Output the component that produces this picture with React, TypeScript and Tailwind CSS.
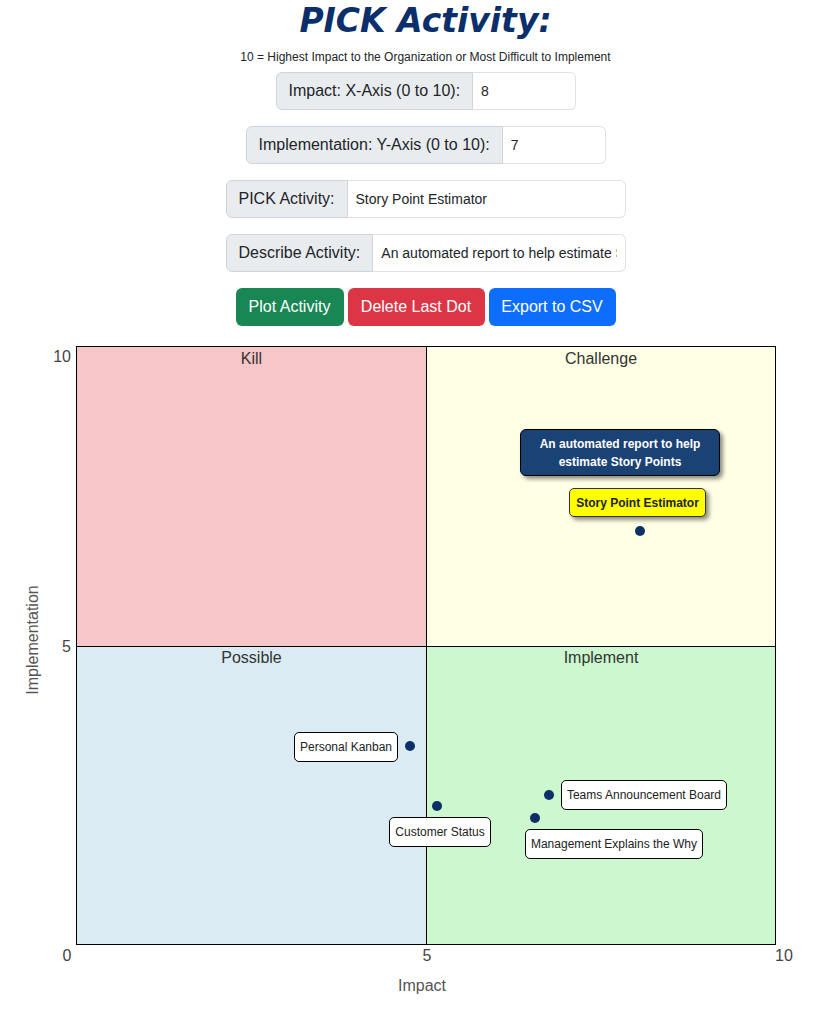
import { useState } from "react";

type Dot = { x: number; y: number };
type Tag = { left: number; top: number; w: number; text: string };

// chart positions are in page pixels, offset from the chart block top (326)
const dots: Dot[] = [
  { x: 635, y: 200 },
  { x: 405, y: 415 },
  { x: 432, y: 475 },
  { x: 544, y: 464 },
  { x: 530, y: 487 },
];

const tags: Tag[] = [
  { left: 294, top: 406, w: 104, text: "Personal Kanban" },
  { left: 389, top: 491, w: 102, text: "Customer Status" },
  { left: 561, top: 454, w: 166, text: "Teams Announcement Board" },
  { left: 525, top: 503, w: 178, text: "Management Explains the Why" },
];

const InputGroup = ({
  label,
  value,
  width,
}: {
  label: string;
  value: string;
  width: string;
}) => (
  <div className={`flex h-[38px] ${width}`}>
    <span className="flex shrink-0 items-center rounded-l-[6px] border border-[#ced4da] bg-[#e9ecef] px-3 text-[16px] text-[#212529]">
      {label}
    </span>
    <input
      className="min-w-0 flex-1 rounded-r-[6px] border border-l-0 border-[#dee2e6] bg-white px-2 text-[14px] text-[#212529] outline-none"
      defaultValue={value}
    />
  </div>
);

const App = () => {
  const [x] = useState("8");
  const [y] = useState("7");

  return (
    <div className="min-h-screen bg-white font-['Liberation_Sans',Arial,sans-serif] text-[#212529]">
      <div className="flex flex-col items-center pl-[25px]">
        <h1 className="h-[41px] font-['DejaVu_Sans',Verdana,sans-serif] text-[33px] font-bold italic leading-[41px] text-[#0a2f6b]">
          PICK Activity:
        </h1>
        <p className="mt-[7px] h-[18px] text-[12px] leading-[18px]">
          10 = Highest Impact to the Organization or Most Difficult to Implement
        </p>
        <div className="mt-[6px] flex flex-col items-center gap-4">
          <InputGroup label="Impact: X-Axis (0 to 10):" value={x} width="w-[300px]" />
          <InputGroup label="Implementation: Y-Axis (0 to 10):" value={y} width="w-[360px]" />
          <InputGroup label="PICK Activity:" value="Story Point Estimator" width="w-[400px]" />
          <InputGroup
            label="Describe Activity:"
            value="An automated report to help estimate Story Points"
            width="w-[400px]"
          />
          <div className="flex gap-[4px] text-[16px] text-white">
            <button className="h-[38px] w-[108px] rounded-[6px] bg-[#198754]">Plot Activity</button>
            <button className="h-[38px] w-[137px] rounded-[6px] bg-[#dc3545]">Delete Last Dot</button>
            <button className="h-[38px] w-[127px] rounded-[6px] bg-[#0d6efd]">Export to CSV</button>
          </div>
        </div>
      </div>

      <div className="relative h-[684px] pt-[20px]">
        <div className="ml-[76px] grid h-[599px] w-[700px] grid-cols-[350px_348px] grid-rows-[300px_297px] border border-black text-center text-[16px] leading-[20px] text-[#333]">
          <div className="border-b border-r border-black bg-[#f7c6c8] pt-[2px]">Kill</div>
          <div className="border-b border-black bg-[#ffffe6] pt-[2px]">Challenge</div>
          <div className="border-r border-black bg-[#dbebf3] pt-[1px]">Possible</div>
          <div className="bg-[#ccf7cf] pt-[1px]">Implement</div>
        </div>

        {/* axis ticks */}
        <div className="absolute left-[51px] top-[22px] w-[20px] text-right text-[16px] leading-[18px] text-[#444]">10</div>
        <div className="absolute left-[51px] top-[312px] w-[20px] text-right text-[16px] leading-[18px] text-[#444]">5</div>
        <div className="absolute left-[52px] top-[621px] w-[30px] text-center text-[16px] leading-[18px] text-[#444]">0</div>
        <div className="absolute left-[412px] top-[621px] w-[30px] text-center text-[16px] leading-[18px] text-[#444]">5</div>
        <div className="absolute left-[769px] top-[621px] w-[30px] text-center text-[16px] leading-[18px] text-[#444]">10</div>
        <div className="absolute left-[382px] top-[651px] w-[80px] text-center text-[16px] leading-[18px] text-[#555]">Impact</div>
        <div className="absolute left-[-27px] top-[304px] w-[120px] -rotate-90 text-center text-[16px] leading-[20px] text-[#555]">
          Implementation
        </div>

        {/* callouts */}
        <div className="absolute left-[520px] top-[103px] flex h-[47px] w-[200px] flex-col items-center justify-center rounded-[6px] border border-black bg-[#1b4275] text-[12px] font-bold leading-[18px] text-white shadow-[3px_3px_4px_rgba(0,0,0,0.45)]">
          <span>An automated report to help</span>
          <span>estimate Story Points</span>
        </div>
        <div className="absolute left-[569px] top-[162px] flex h-[29px] w-[137px] items-center justify-center rounded-[5px] border border-[#333] bg-[#ffff00] text-[12px] font-bold text-[#222] shadow-[3px_3px_4px_rgba(0,0,0,0.45)]">
          Story Point Estimator
        </div>

        {tags.map((t) => (
          <div
            key={t.text}
            className="absolute flex h-[30px] items-center justify-center whitespace-nowrap rounded-[5px] border border-black bg-white text-[12px] text-[#222]"
            style={{ left: t.left, top: t.top, width: t.w }}
          >
            {t.text}
          </div>
        ))}

        {dots.map((d, i) => (
          <div
            key={i}
            className="absolute h-[10px] w-[10px] rounded-full bg-[#0b2f66]"
            style={{ left: d.x, top: d.y }}
          />
        ))}
      </div>
    </div>
  );
};

export default App;
